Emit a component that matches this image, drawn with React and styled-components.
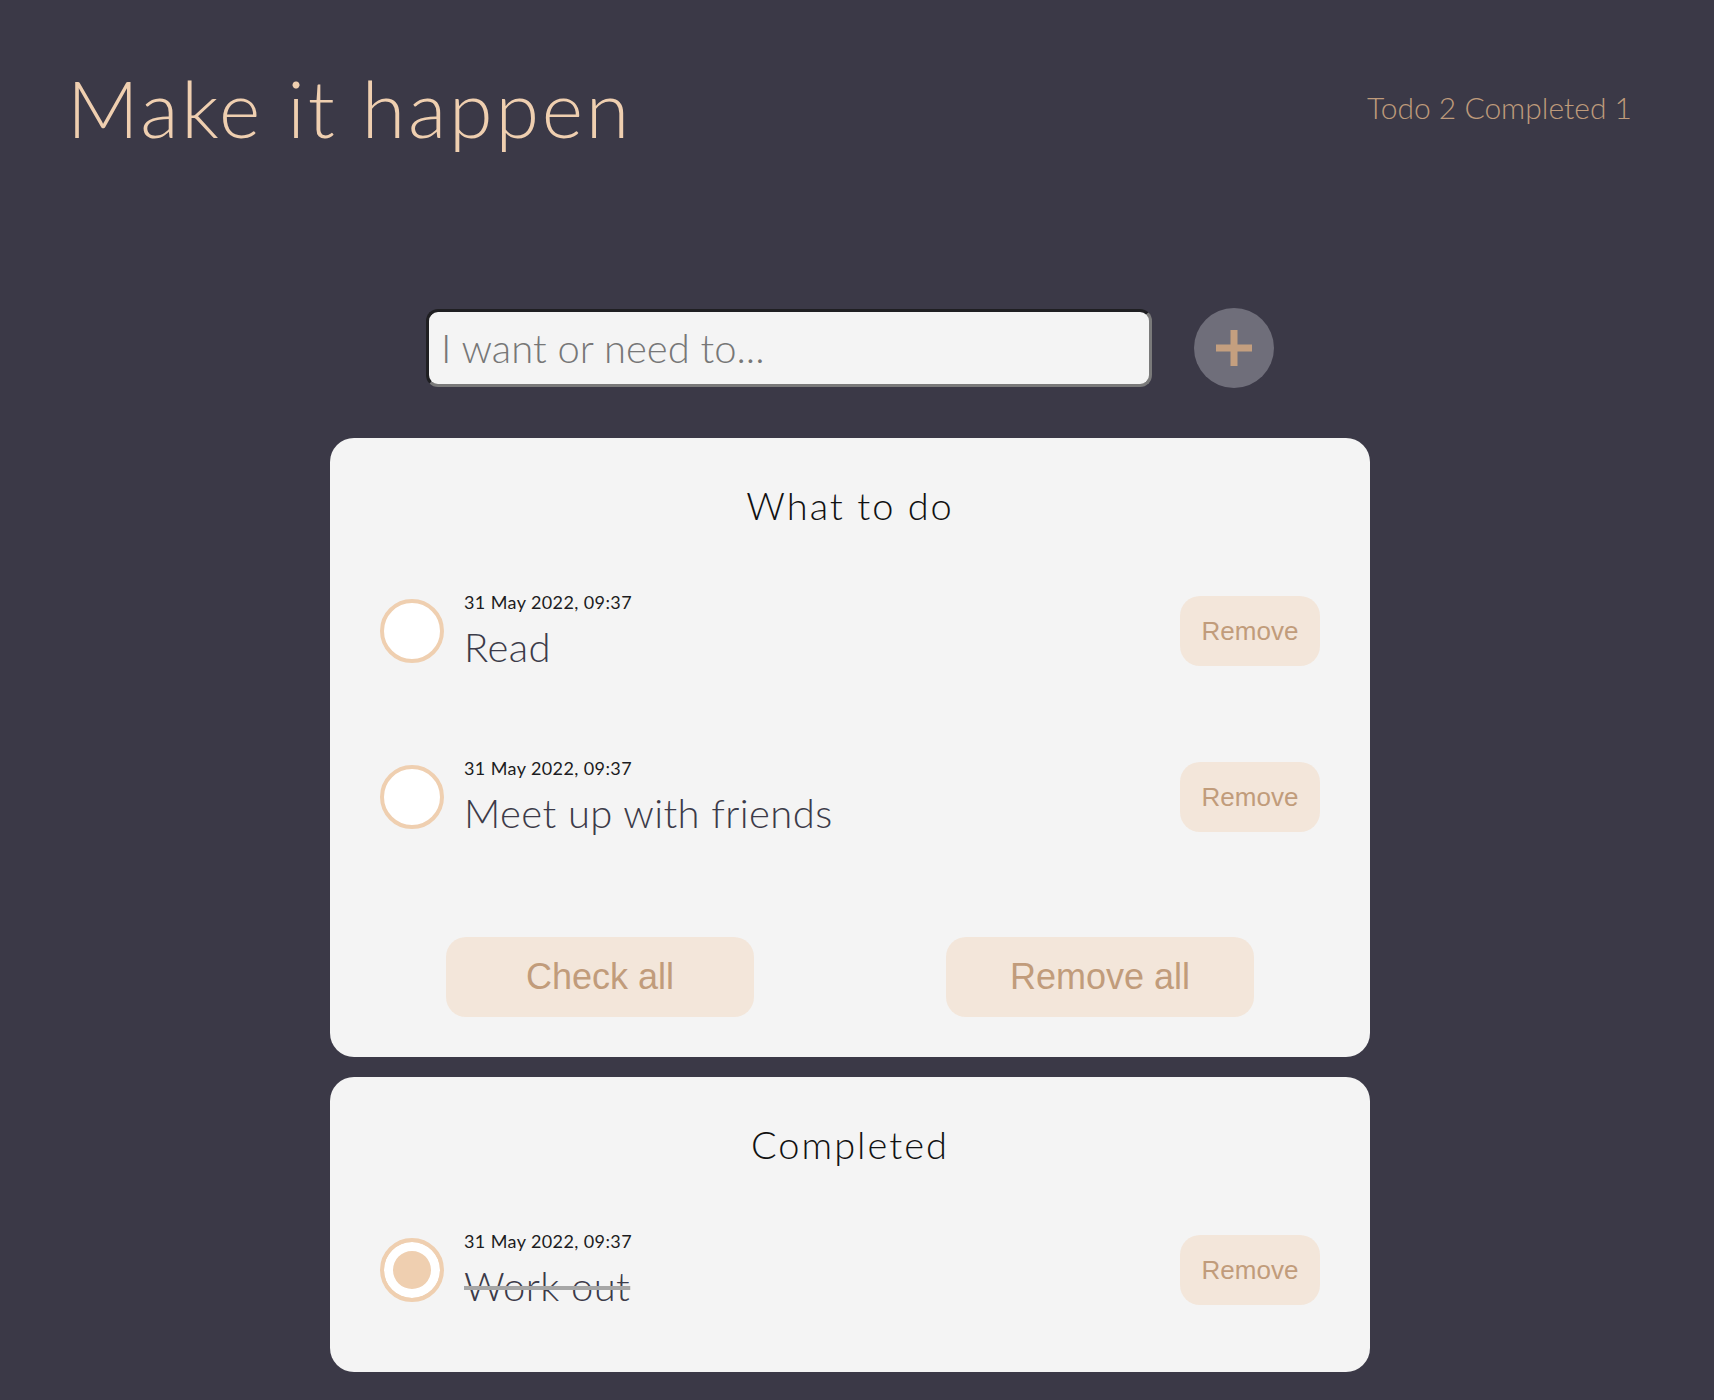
import React from "react";
import styled, { createGlobalStyle, css } from "styled-components";

const GlobalStyle = createGlobalStyle`
  html, body {
    margin: 0;
    padding: 0;
    background: #3b3947;
  }
  body {
    font-family: "Lato", "Noto Sans", sans-serif;
    font-weight: 300;
  }
  * { box-sizing: border-box; }
`;

const Page = styled.div`
  min-height: 1400px;
  background: #3b3947;
`;

const Header = styled.header`
  display: flex;
  justify-content: space-between;
  align-items: flex-start;
  padding: 68px 82px 0 67px;
`;

const Title = styled.h1`
  margin: 0;
  font-size: 79px;
  line-height: 1;
  font-weight: 300;
  color: #efcfb0;
  letter-spacing: 2.8px;
`;

const Stats = styled.div`
  margin-top: 24px;
  font-size: 30px;
  line-height: 1;
  font-weight: 300;
  color: #bf9b7b;
`;

const Main = styled.main`
  width: 1040px;
  margin: 161px 0 0 330px;
  display: flex;
  flex-direction: column;
  gap: 20px;
`;

const InputRow = styled.form`
  display: flex;
  justify-content: center;
  align-items: center;
  gap: 42px;
  margin-bottom: 30px;
`;

const TaskInput = styled.input`
  width: 726px;
  height: 78px;
  border-style: solid;
  border-width: 3px;
  border-color: #1f1f22 #7a7a7a #7a7a7a #1f1f22;
  border-radius: 12px;
  background: #f4f4f4;
  padding: 0 12px;
  font-family: "Lato", "Noto Sans", sans-serif;
  font-weight: 300;
  font-size: 40px;
  color: #333;
  outline: none;
  &::placeholder {
    color: #777;
  }
`;

const AddButton = styled.button`
  width: 80px;
  height: 80px;
  border-radius: 50%;
  border: none;
  background: #6f6e7a;
  display: flex;
  align-items: center;
  justify-content: center;
  padding: 0;
  cursor: pointer;
`;

const Card = styled.section`
  background: #f4f4f4;
  border-radius: 24px;
  padding: 48px 50px 40px;
`;

const CardTitle = styled.h2`
  margin: 0;
  text-align: center;
  font-size: 38px;
  line-height: 1;
  font-weight: 300;
  letter-spacing: 2px;
  color: #111;
`;

const ItemList = styled.ul`
  list-style: none;
  margin: 67px 0 22px;
  padding: 0;
  display: flex;
  flex-direction: column;
  gap: 86px;
`;

const Item = styled.li`
  display: flex;
  align-items: center;
  height: 80px;
`;

const Radio = styled.span`
  flex: none;
  width: 64px;
  height: 64px;
  border-radius: 50%;
  border: 4px solid #efcfb0;
  background: #fff;
  ${(p) =>
    p.$checked &&
    css`
      background: #efcfb0;
      box-shadow: inset 0 0 0 9px #fff;
    `}
`;

const ItemText = styled.div`
  flex: 1;
  margin-left: 20px;
  display: flex;
  flex-direction: column;
`;

const ItemDate = styled.span`
  font-size: 18px;
  line-height: 22px;
  font-weight: 400;
  letter-spacing: 0.4px;
  color: #1c1c22;
`;

const ItemName = styled.span`
  margin-top: 10px;
  font-size: 40px;
  line-height: 48px;
  font-weight: 300;
  letter-spacing: 0.4px;
  color: #3c3b49;
  ${(p) =>
    p.$done &&
    css`
      text-decoration: line-through;
      text-decoration-color: #a6a6a6;
      text-decoration-thickness: 4px;
    `}
`;

const SoftButton = styled.button`
  flex: none;
  border: none;
  background: #f3e6da;
  color: #c19c7b;
  font-family: "Liberation Sans", Arial, sans-serif;
  cursor: pointer;
  padding: 0;
  ${(p) =>
    p.$big
      ? css`
          width: 308px;
          height: 80px;
          border-radius: 20px;
          font-size: 36px;
        `
      : css`
          width: 140px;
          height: 70px;
          border-radius: 20px;
          font-size: 26px;
        `}
`;

const ButtonBar = styled.div`
  display: grid;
  grid-template-columns: 1fr 1fr;
  justify-items: center;
  margin: 100px -30px 0;
`;

const PlusIcon = () => (
  <svg width="36" height="36" viewBox="0 0 36 36" aria-hidden="true">
    <rect x="14.5" y="0" width="7" height="36" fill="#c49f7f" />
    <rect x="0" y="14.5" width="36" height="7" fill="#c49f7f" />
  </svg>
);

const todos = [
  { id: 1, date: "31 May 2022, 09:37", text: "Read" },
  { id: 2, date: "31 May 2022, 09:37", text: "Meet up with friends" },
];
const done = [{ id: 3, date: "31 May 2022, 09:37", text: "Work out" }];

const TodoRow = ({ item, checked }) => (
  <Item>
    <Radio $checked={checked} />
    <ItemText>
      <ItemDate>{item.date}</ItemDate>
      <ItemName $done={checked}>{item.text}</ItemName>
    </ItemText>
    <SoftButton>Remove</SoftButton>
  </Item>
);

export default function App() {
  return (
    <Page>
      <GlobalStyle />
      <Header>
        <Title>Make it happen</Title>
        <Stats>Todo 2 Completed 1</Stats>
      </Header>
      <Main>
        <InputRow onSubmit={(e) => e.preventDefault()}>
          <TaskInput placeholder="I want or need to..." />
          <AddButton type="submit" aria-label="Add">
            <PlusIcon />
          </AddButton>
        </InputRow>
        <Card>
          <CardTitle>What to do</CardTitle>
          <ItemList>
            {todos.map((t) => (
              <TodoRow key={t.id} item={t} />
            ))}
          </ItemList>
          <ButtonBar>
            <SoftButton $big>Check all</SoftButton>
            <SoftButton $big>Remove all</SoftButton>
          </ButtonBar>
        </Card>
        <Card>
          <CardTitle>Completed</CardTitle>
          <ItemList>
            {done.map((t) => (
              <TodoRow key={t.id} item={t} checked />
            ))}
          </ItemList>
        </Card>
      </Main>
    </Page>
  );
}
